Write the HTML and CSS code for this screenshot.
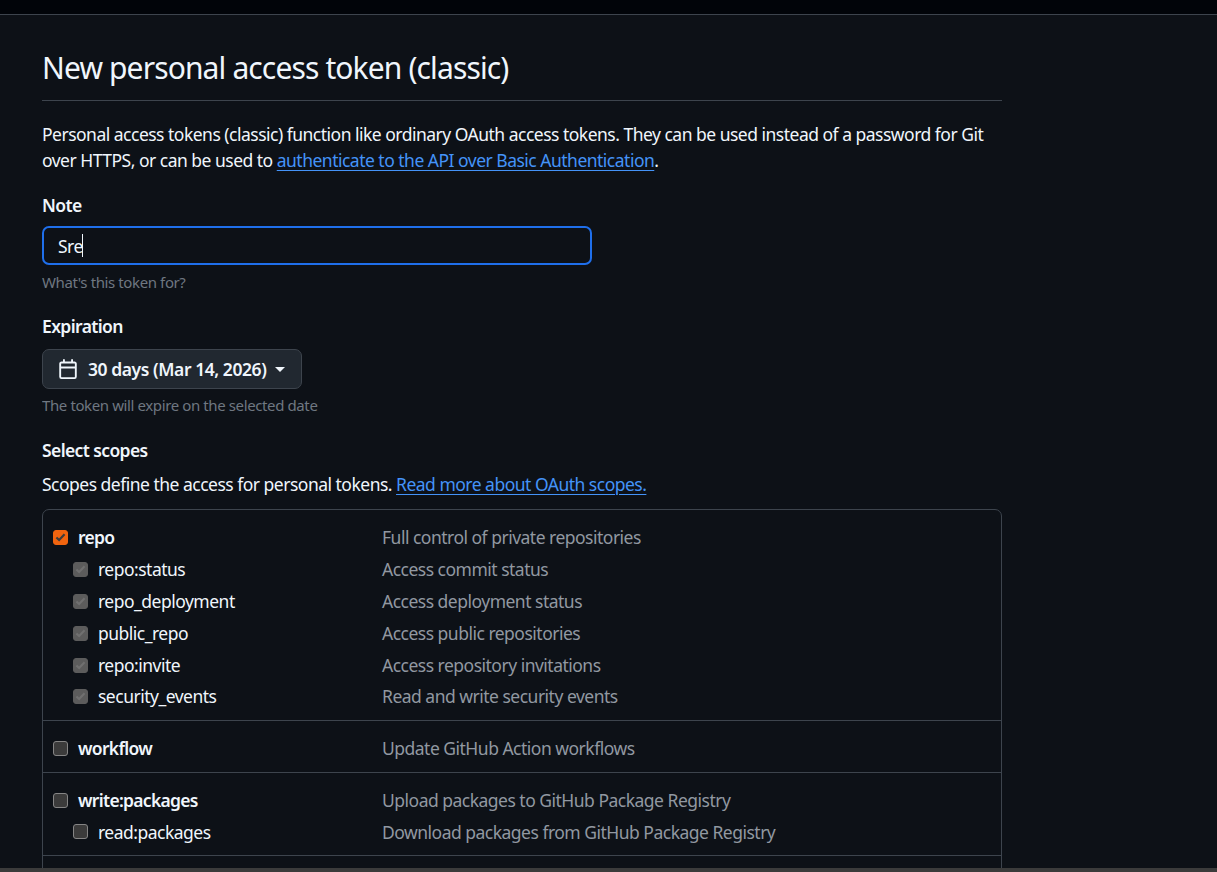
FILE: index.html
```html
<!DOCTYPE html>
<html lang="en">
<head>
<meta charset="UTF-8">
<title>New personal access token (classic)</title>
<link rel="stylesheet" href="styles.css">
</head>
<body>

<div class="topbar"></div>

<div class="container">
    <h1>New personal access token (classic)</h1>

    <p class="intro">Personal access tokens (classic) function like ordinary OAuth access tokens. They can be used instead of a password for Git over HTTPS, or can be used to <a href="#">authenticate to the API over Basic Authentication</a>.</p>

    <div class="label note-label">Note</div>
    <div class="text-input">Sre<span class="caret"></span></div>
    <div class="hint">What's this token for?</div>

    <div class="label expiry-label">Expiration</div>
    <button class="date-button">
        <svg class="calendar" viewBox="0 0 16 16" width="20" height="20"><path fill="currentColor" d="M4.75 0a.75.75 0 0 1 .75.75V2h5V.75a.75.75 0 0 1 1.5 0V2h1.25c.966 0 1.75.784 1.75 1.75v10.5A1.75 1.75 0 0 1 13.25 16H2.75A1.75 1.75 0 0 1 1 14.25V3.75C1 2.784 1.784 2 2.75 2H4V.75A.75.75 0 0 1 4.75 0ZM2.5 7.5v6.75c0 .138.112.25.25.25h10.5a.25.25 0 0 0 .25-.25V7.5Zm10.75-4H2.75a.25.25 0 0 0-.25.25V6h11V3.75a.25.25 0 0 0-.25-.25Z"/></svg>
        <span>30 days (Mar 14, 2026)</span>
        <i class="dropdown"></i>
    </button>
    <div class="hint date-hint">The token will expire on the selected date</div>

    <div class="label scopes-label">Select scopes</div>
    <p class="scopes-intro">Scopes define the access for personal tokens. <a href="#">Read more about OAuth scopes.</a></p>

    <div class="scopes">
        <div class="group">
            <div class="row main">
                <span class="box on"><svg viewBox="0 0 16 16" width="14" height="14"><path d="M3 8.5l3.3 3.3L13 4.6" fill="none" stroke="#3b3b3b" stroke-width="2.6"/></svg></span>
                <span class="name">repo</span>
                <span class="desc">Full control of private repositories</span>
            </div>
            <div class="row sub">
                <span class="box dim"><svg viewBox="0 0 16 16" width="14" height="14"><path d="M3 8.5l3.3 3.3L13 4.6" fill="none" stroke="#707070" stroke-width="2.6"/></svg></span>
                <span class="name">repo:status</span>
                <span class="desc">Access commit status</span>
            </div>
            <div class="row sub">
                <span class="box dim"><svg viewBox="0 0 16 16" width="14" height="14"><path d="M3 8.5l3.3 3.3L13 4.6" fill="none" stroke="#707070" stroke-width="2.6"/></svg></span>
                <span class="name">repo_deployment</span>
                <span class="desc">Access deployment status</span>
            </div>
            <div class="row sub">
                <span class="box dim"><svg viewBox="0 0 16 16" width="14" height="14"><path d="M3 8.5l3.3 3.3L13 4.6" fill="none" stroke="#707070" stroke-width="2.6"/></svg></span>
                <span class="name">public_repo</span>
                <span class="desc">Access public repositories</span>
            </div>
            <div class="row sub">
                <span class="box dim"><svg viewBox="0 0 16 16" width="14" height="14"><path d="M3 8.5l3.3 3.3L13 4.6" fill="none" stroke="#707070" stroke-width="2.6"/></svg></span>
                <span class="name">repo:invite</span>
                <span class="desc">Access repository invitations</span>
            </div>
            <div class="row sub short lift">
                <span class="box dim"><svg viewBox="0 0 16 16" width="14" height="14"><path d="M3 8.5l3.3 3.3L13 4.6" fill="none" stroke="#707070" stroke-width="2.6"/></svg></span>
                <span class="name">security_events</span>
                <span class="desc">Read and write security events</span>
            </div>
        </div>
        <div class="group">
            <div class="row main">
                <span class="box"></span>
                <span class="name">workflow</span>
                <span class="desc">Update GitHub Action workflows</span>
            </div>
        </div>
        <div class="group">
            <div class="row main">
                <span class="box"></span>
                <span class="name">write:packages</span>
                <span class="desc">Upload packages to GitHub Package Registry</span>
            </div>
            <div class="row sub short">
                <span class="box"></span>
                <span class="name">read:packages</span>
                <span class="desc">Download packages from GitHub Package Registry</span>
            </div>
        </div>
        <div class="group"></div>
    </div>
</div>

<div class="scrollbar"></div>

</body>
</html>
```

FILE: styles.css
```css
html, body {
    height: 100%;
}
body {
    font-family: "Noto Sans", "Open Sans", sans-serif;
    font-size: 17.5px;
    line-height: 26px;
    letter-spacing: -0.029em;
    background-color: #0d1117;
    color: #f0f6fc;
    margin: 0;
    padding: 0;
    overflow: hidden;
    display: flex;
    flex-direction: column;
}
a {
    color: #4493f8;
    text-decoration: underline;
    text-underline-offset: 3px;
    text-decoration-thickness: 1px;
}
.topbar {
    height: 14px;
    flex: none;
    background-color: #010409;
    border-bottom: 1px solid #3d444d;
}
.container {
    width: 960px;
    margin-left: 42px;
    flex: 1;
    min-height: 0;
    overflow: hidden;
}
h1 {
    margin: 0;
    padding: 33px 0 12px;
    height: 40px;
    font-size: 30px;
    line-height: 40px;
    font-weight: 400;
    letter-spacing: -0.029em;
    border-bottom: 1px solid #3d444d;
}
.intro {
    margin: 20px 0 0;
}
.scopes-intro {
    margin: 8px 0 0;
}
.label {
    font-weight: 600;
    line-height: 26px;
    letter-spacing: -0.035em;
}
.note-label {
    margin-top: 19px;
}
.expiry-label {
    margin-top: 21px;
}
.scopes-label {
    margin-top: 22px;
}
.text-input {
    margin-top: 8px;
    width: 550px;
    height: 39px;
    box-sizing: border-box;
    padding-left: 14px;
    line-height: 37px;
    border: 2px solid #1f6feb;
    border-radius: 7px;
}
.caret {
    display: inline-block;
    width: 1px;
    height: 23px;
    margin-left: -1px;
    vertical-align: -4px;
    background-color: #f0f6fc;
}
.hint {
    font-size: 15px;
    line-height: 20px;
    letter-spacing: -0.026em;
    color: #6f7781;
    margin-top: 7px;
}
.date-hint {
    margin-top: 6px;
}
.date-button {
    display: flex;
    align-items: center;
    margin-top: 10px;
    width: 260px;
    height: 40px;
    padding: 0 0 0 15px;
    font-family: inherit;
    font-size: 17.5px;
    font-weight: 600;
    letter-spacing: -0.025em;
    color: #f0f6fc;
    background-color: #212830;
    border: 1px solid #3d444d;
    border-radius: 7px;
}
.calendar {
    margin-right: 10px;
    color: #f0f6fc;
}
.dropdown {
    margin-left: 9px;
    border-left: 5px solid transparent;
    border-right: 5px solid transparent;
    border-top: 5px solid #f0f6fc;
}
.scopes {
    margin-top: 12px;
    border: 1px solid #3d444d;
    border-radius: 7px;
}
.group {
    padding: 11px 0 8px;
    border-bottom: 1px solid #3d444d;
}
.group:last-child {
    border-bottom: none;
}
.row {
    display: flex;
    align-items: center;
    height: 32px;
    box-sizing: border-box;
}
.row.short {
    height: 31px;
}
.row.lift {
    padding-bottom: 1px;
}
.box {
    flex: none;
    width: 15px;
    height: 15px;
    box-sizing: border-box;
    margin-left: 10px;
    display: flex;
    align-items: center;
    justify-content: center;
    border: 1px solid #858585;
    border-radius: 3px;
    background-color: #3b3b3b;
}
.box.on {
    background-color: #f0640f;
    border-color: #f0640f;
}
.box.dim {
    background-color: #5c5c5c;
    border-color: #5c5c5c;
}
.name {
    margin-left: 10px;
    width: 304px;
    flex: none;
}
.main .name {
    font-weight: 600;
    letter-spacing: -0.04em;
}
.sub .box {
    margin-left: 30px;
}
.sub .name {
    width: 284px;
}
.desc {
    color: #9198a1;
}
.scrollbar {
    height: 4px;
    flex: none;
    background-color: #3b3b3b;
}
```
